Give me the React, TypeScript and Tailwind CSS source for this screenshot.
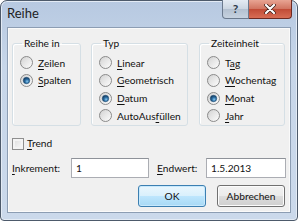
import React from "react";

function Radio({ checked }: { checked?: boolean }) {
  return (
    <svg width="13" height="13" viewBox="0 0 13 13" className="shrink-0">
      <defs>
        <linearGradient id="rOuter" x1="0" y1="0" x2="1" y2="1">
          <stop offset="0" stopColor="#cfcfcf" />
          <stop offset="1" stopColor="#ffffff" />
        </linearGradient>
        <linearGradient id="rInner" x1="0" y1="0" x2="1" y2="1">
          <stop offset="0" stopColor="#d9d9d9" />
          <stop offset="1" stopColor="#f7f7f7" />
        </linearGradient>
        <radialGradient id="rDot" cx="0.6" cy="0.65" r="0.6">
          <stop offset="0" stopColor="#8ccaf0" />
          <stop offset="0.5" stopColor="#2f72a8" />
          <stop offset="1" stopColor="#163f66" />
        </radialGradient>
      </defs>
      <circle cx="6.5" cy="6.5" r="6" fill="url(#rOuter)" stroke="#8a8a8a" />
      <circle cx="6.5" cy="6.5" r="4" fill="url(#rInner)" />
      {checked && <circle cx="6.5" cy="6.5" r="3.2" fill="url(#rDot)" stroke="#1b4a72" strokeWidth="0.6" />}
    </svg>
  );
}

function Opt({ pre, key2, post, checked }: { pre?: string; key2: string; post?: string; checked?: boolean }) {
  return (
    <div className="flex items-center h-[17.7px] gap-[5px]">
      <Radio checked={checked} />
      <span className="leading-none">
        {pre}
        <span className="underline underline-offset-2">{key2}</span>
        {post}
      </span>
    </div>
  );
}

function Group({ title, width, children }: { title: string; width: string; children: React.ReactNode }) {
  return (
    <fieldset className={`${width} h-[90px] border border-[#d5dfe5] rounded-[3px] pl-[7px] shadow-[inset_1px_1px_0_#fff]`}>
      <legend className="ml-[2px] px-[2px] leading-[15px]">{title}</legend>
      <div className="pt-[3px]">{children}</div>
    </fieldset>
  );
}

function Button({ children, isDefault }: { children: React.ReactNode; isDefault?: boolean }) {
  return (
    <button
      className={
        isDefault
          ? "w-[68px] h-[22px] rounded-[3px] border border-[#3c7fb1] bg-[linear-gradient(#eaf6fd_0%,#d9f0fc_50%,#bee6fd_50%,#a7d9f5_100%)] shadow-[inset_0_0_0_1px_#c7e9fd] leading-none"
          : "w-[68px] h-[22px] rounded-[3px] border border-[#707070] bg-[linear-gradient(#f2f2f2_0%,#ebebeb_50%,#dddddd_50%,#cfcfcf_100%)] shadow-[inset_0_0_0_1px_#fcfcfc] leading-none"
      }
    >
      {children}
    </button>
  );
}

export default function App() {
  return (
    <div className="w-[300px] h-[222px] bg-white font-['Lato','Noto_Sans',sans-serif] text-[10.2px] text-[#111]">
      <div className="w-[298px] h-[221px] rounded-t-[7px] rounded-b-[4px] border border-[#4d5a6b] bg-[linear-gradient(#b7c9e1,#c7d6e9_30%,#cbd9eb)] flex flex-col shadow-[inset_0_0_0_1px_#e3ebf5]">
        <div className="h-[26px] flex items-start justify-between">
          <div className="pl-[6px] pt-[6px] text-[13px] leading-none text-[#1e1e1e]">Reihe</div>
          <div className="flex mr-[5px] -mt-px">
            <div className="w-[27px] h-[19px] rounded-bl-[4px] border border-[#6b7a8e] border-t-0 bg-[linear-gradient(#e4ebf3,#cbd5e1_50%,#b3c0d0_50%,#c6d2e0)] flex items-center justify-center text-[12px] font-bold text-[#2d3a4a]">
              ?
            </div>
            <div className="w-[43px] h-[19px] rounded-br-[4px] border border-[#6e2a22] border-t-0 border-l-0 bg-[linear-gradient(#e8a493,#d0735f_50%,#c04a35_50%,#d86d55)] flex items-center justify-center">
              <svg width="12" height="10" viewBox="0 0 12 10">
                <path d="M2 1 L10 9 M10 1 L2 9" stroke="#3a1a14" strokeWidth="3.6" strokeLinecap="round" />
                <path d="M2 1 L10 9 M10 1 L2 9" stroke="#ffffff" strokeWidth="2.2" strokeLinecap="round" />
              </svg>
            </div>
          </div>
        </div>
        <div className="mx-[6px] h-[186px] border border-[#8c9db3] bg-[#f0f0f0] shadow-[inset_0_0_0_1px_#fafafa] flex flex-col pl-[4px]">
          <div className="flex pt-[8px]">
            <Group title="Reihe in" width="w-[69px]">
              <Opt key2="Z" post="eilen" />
              <Opt key2="S" post="palten" checked />
            </Group>
            <div className="w-[10px]" />
            <Group title="Typ" width="w-[97px]">
              <Opt key2="L" post="inear" />
              <Opt key2="G" post="eometrisch" />
              <Opt key2="D" post="atum" checked />
              <Opt pre="AutoAus" key2="f" post="üllen" />
            </Group>
            <div className="w-[11px]" />
            <Group title="Zeiteinheit" width="w-[86px]">
              <Opt pre="T" key2="a" post="g" />
              <Opt key2="W" post="ochentag" />
              <Opt key2="M" post="onat" checked />
              <Opt key2="J" post="ahr" />
            </Group>
          </div>
          <div className="flex items-center gap-[3px] mt-[11px] h-[13px]">
            <div className="w-[12px] h-[12px] border border-[#8f8f8f] bg-[linear-gradient(135deg,#dcdcdc,#fbfbfb)] shadow-[inset_0_0_0_2px_#f4f4f4]" />
            <span className="leading-none">
              <span className="underline underline-offset-2">T</span>rend
            </span>
          </div>
          <div className="flex items-center mt-[8px] h-[20px]">
            <span className="w-[59px] leading-none">
              <span className="underline underline-offset-2">I</span>nkrement:
            </span>
            <div className="w-[78px] h-[20px] border border-[#abadb3] border-t-[#8e9299] bg-white pl-[4px] flex items-center leading-none">1</div>
            <span className="ml-[8px] w-[49px] leading-none">
              <span className="underline underline-offset-2">E</span>ndwert:
            </span>
            <div className="w-[80px] h-[20px] border border-[#abadb3] border-t-[#8e9299] bg-white pl-[4px] flex items-center leading-none">1.5.2013</div>
          </div>
          <div className="flex justify-end gap-[11px] pr-[5px] mt-[7px]">
            <Button isDefault>OK</Button>
            <Button>Abbrechen</Button>
          </div>
        </div>
      </div>
    </div>
  );
}
